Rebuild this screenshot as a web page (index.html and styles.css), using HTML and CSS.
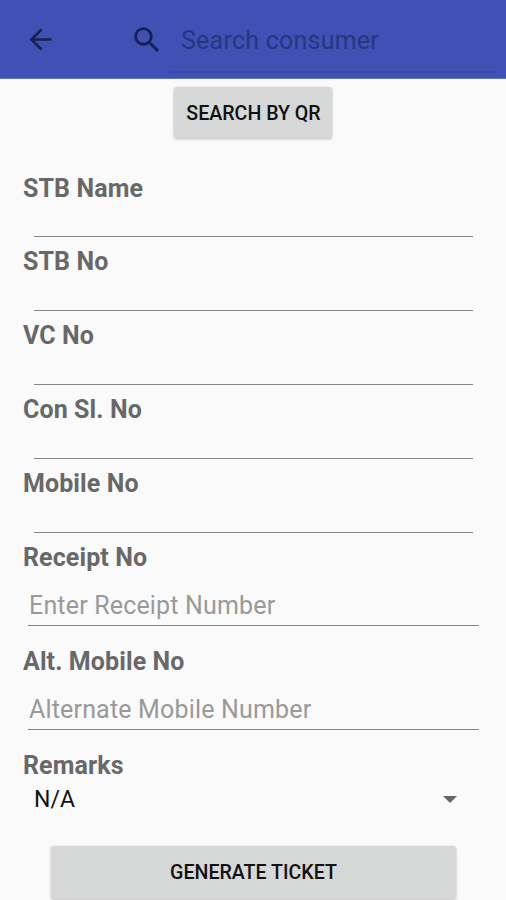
FILE: index.html
```html
<!DOCTYPE html>
<html lang="en">
<head>
<meta charset="utf-8">
<title>Generate Ticket</title>
<link rel="stylesheet" href="styles.css">
</head>
<body>
<header class="appbar">
  <svg class="back" viewBox="0 0 24 24"><path d="M20 11.1H7.7l5.7-5.7L12.1 4l-8 8 8 8 1.3-1.4-5.7-5.7H20v-1.8z"/></svg>
  <div class="search">
    <svg class="glass" viewBox="0 0 24 24"><path d="M15.5 14h-.79l-.28-.27A6.47 6.47 0 0 0 16 9.5 6.5 6.5 0 1 0 9.5 16c1.61 0 3.09-.59 4.23-1.57l.27.28v.79l5 4.99L20.49 19l-4.99-5zm-6 0C7.01 14 5 11.99 5 9.5S7.01 5 9.5 5 14 7.01 14 9.5 11.99 14 9.5 14z"/></svg>
    <div class="query"><span>Search consumer</span></div>
  </div>
</header>
<main class="form">
  <button class="btn qr"><span>SEARCH BY QR</span></button>
  <section class="field"><label>STB Name</label><div class="value"></div></section>
  <section class="field"><label>STB No</label><div class="value"></div></section>
  <section class="field"><label>VC No</label><div class="value"></div></section>
  <section class="field"><label>Con Sl. No</label><div class="value"></div></section>
  <section class="field"><label>Mobile No</label><div class="value"></div></section>
  <section class="field entry"><label>Receipt No</label><div class="value">Enter Receipt Number</div></section>
  <section class="field entry"><label>Alt. Mobile No</label><div class="value">Alternate Mobile Number</div></section>
  <section class="field remarks"><label>Remarks</label><div class="select"><span>N/A</span><i class="caret"></i></div></section>
  <button class="btn submit"><span>GENERATE TICKET</span></button>
</main>
</body>
</html>
```
FILE: styles.css
```css
* { box-sizing: border-box; }
body { margin: 0; height: 900px; overflow: hidden; background: #fafafa; font-family: Roboto, sans-serif; }
.appbar { height: 79px; background: #3f51b5; display: flex; align-items: flex-start; padding: 0 9px 0 24px; border-bottom: 1px solid #6472c0; }
.back { width: 33px; height: 33px; margin-top: 23px; fill: #17204f; }
.search { flex: 1; display: flex; margin-left: 73px; }
.glass { width: 34px; height: 34px; margin: 22.5px 6px 0 0; fill: #17204f; }
.query { flex: 1; height: 73px; padding: 26px 0 0 11px; border-bottom: 2px solid #394aa6; font-size: 25px; line-height: 30px; letter-spacing: .24px; color: #27367f; white-space: nowrap; }
.form { display: flex; flex-direction: column; padding: 8px 23px 0; }
.btn { border: 0; border-radius: 3px; background: #d6d8d7; color: #111; font: 500 19.6px/24px Roboto, sans-serif; box-shadow: 0 1px 3px rgba(0,0,0,.26); padding: 0; white-space: nowrap; }
.qr { align-self: center; width: 158px; height: 51px; margin-bottom: 34px; padding: 3px 0 0 1px; }
.field { height: 73.9px; flex: none; }
.field label { display: block; height: 32px; padding-top: .6px; font-size: 25px; line-height: 32px; letter-spacing: .1px; font-weight: 700; color: #686868; white-space: nowrap; }
.value { height: 33px; margin: 0 10px 0 11px; padding-left: 1px; border-bottom: 1px solid #858585; font-size: 25px; line-height: 32px; letter-spacing: .17px; color: #999; white-space: nowrap; }
.entry { height: 104px; }
.entry label { padding-top: 1px; }
.entry .value { height: 53px; margin: 0 4px 0 5px; padding-top: 17px; }
.remarks { height: 97px; }
.remarks label { padding-top: 1px; }
.select { display: flex; align-items: center; justify-content: space-between; height: 34px; padding: 2px 26px 0 11px; font-size: 23px; color: #111; }
.caret { border: 7px solid transparent; border-top-color: #666; border-bottom: 0; }
.submit { align-self: center; width: 405px; height: 53px; flex: none; padding: 0 0 0 1px; }
```
